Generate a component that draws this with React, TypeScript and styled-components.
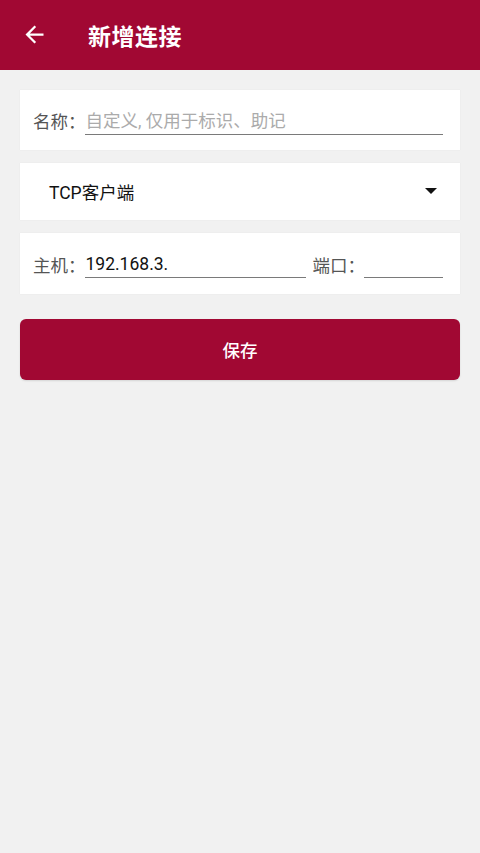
import * as React from 'react';
import styled, { createGlobalStyle } from 'styled-components';

const brand = '#a10833';

const GlobalStyle = createGlobalStyle`
  html, body {
    margin: 0;
    padding: 0;
    background: #f1f1f1;
    font-family: Roboto, 'Noto Sans CJK SC', 'Noto Sans', sans-serif;
  }
`;

const Page = styled.div`
  min-height: 853px;
  background: #f1f1f1;
`;

const TopBar = styled.header`
  height: 70px;
  background: ${brand};
  display: flex;
  align-items: center;
  padding-left: 21px;
  box-sizing: border-box;
`;

const BackButton = styled.button`
  width: 27px;
  height: 27px;
  padding: 0;
  border: 0;
  background: none;
  display: flex;
  color: #fff;
  margin-top: -1px;
`;

const Title = styled.h1`
  margin: 0 0 0 40px;
  font-size: 23px;
  font-weight: 700;
  color: #fff;
  letter-spacing: 0.5px;
`;

const Body = styled.main`
  padding: 20px 20px;
  display: flex;
  flex-direction: column;
  gap: 13px;
`;

const Card = styled.div<{ $height: number; $left: number; $right: number }>`
  height: ${(p) => p.$height}px;
  background: #fff;
  box-shadow: 0 0 1px rgba(0, 0, 0, 0.08);
  display: flex;
  align-items: center;
  padding: 0 ${(p) => p.$right}px 0 ${(p) => p.$left}px;
  box-sizing: border-box;
`;

const Label = styled.span<{ $gap?: number }>`
  font-size: 17.5px;
  color: #555;
  white-space: nowrap;
  margin-left: ${(p) => p.$gap ?? 0}px;
  margin-top: 1px;
`;

const Field = styled.input<{ $width?: number }>`
  ${(p) => (p.$width ? `width: ${p.$width}px; flex: none;` : 'flex: 1; min-width: 0;')}
  height: 26px;
  margin-left: -1px;
  margin-top: 2px;
  padding: 0 1px;
  border: 0;
  border-bottom: 1px solid #7a7a7a;
  outline: none;
  background: transparent;
  font-family: inherit;
  font-size: 17.5px;
  color: #111;

  &::placeholder {
    color: #ababab;
  }
`;

const SelectText = styled.span`
  flex: 1;
  font-size: 17.5px;
  color: #111;
`;

const Caret = styled.span`
  width: 0;
  height: 0;
  border-left: 6px solid transparent;
  border-right: 6px solid transparent;
  border-top: 6px solid #111;
  margin-top: -2px;
`;

const SaveButton = styled.button`
  margin-top: 12px;
  height: 61px;
  border: 0;
  border-radius: 6px;
  background: ${brand};
  color: #fff;
  font-family: inherit;
  font-size: 17.5px;
  font-weight: 500;
  box-shadow: 0 1px 2px rgba(0, 0, 0, 0.12);
`;

export default function App() {
  return (
    <Page>
      <GlobalStyle />
      <TopBar>
        <BackButton aria-label="返回">
          <svg width="27" height="27" viewBox="0 0 24 24" fill="currentColor">
            <path d="M20 11H7.83l5.59-5.59L12 4l-8 8 8 8 1.41-1.41L7.83 13H20v-2z" />
          </svg>
        </BackButton>
        <Title>新增连接</Title>
      </TopBar>
      <Body>
        <Card $height={60} $left={13} $right={17}>
          <Label>名称：</Label>
          <Field placeholder="自定义, 仅用于标识、助记" />
        </Card>
        <Card $height={57} $left={29} $right={23}>
          <SelectText>TCP客户端</SelectText>
          <Caret />
        </Card>
        <Card $height={61} $left={13} $right={17}>
          <Label>主机：</Label>
          <Field defaultValue="192.168.3." />
          <Label $gap={7}>端口：</Label>
          <Field $width={77} />
        </Card>
        <SaveButton>保存</SaveButton>
      </Body>
    </Page>
  );
}
